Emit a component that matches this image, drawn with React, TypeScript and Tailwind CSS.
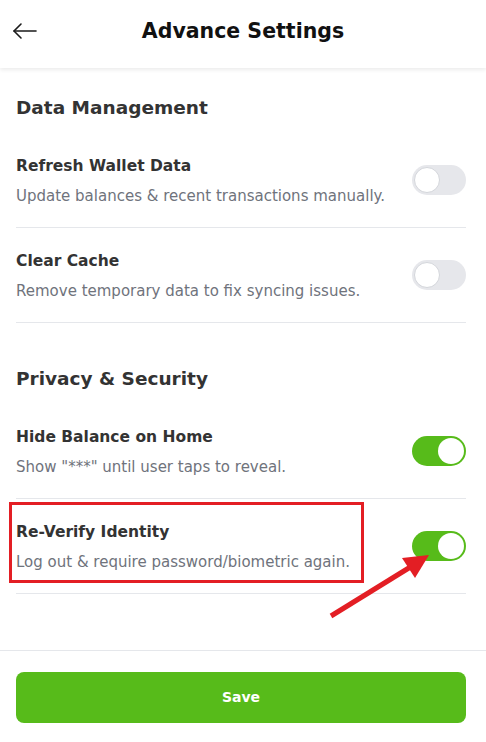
import React, { useState } from 'react';

interface SettingRowProps {
  title: string;
  description: string;
  enabled: boolean;
  onToggle: () => void;
}

const Toggle: React.FC<{ on: boolean; onClick: () => void }> = ({ on, onClick }) => (
  <button
    type="button"
    onClick={onClick}
    className={`relative flex-shrink-0 w-[54px] h-[30px] rounded-full transition-colors ${
      on ? 'bg-[#57bb1a]' : 'bg-[#e6e7eb]'
    }`}
  >
    <span
      className={`absolute top-[2px] w-[26px] h-[26px] rounded-full bg-white ${
        on ? 'left-[26px]' : 'left-[2px] border border-[#d4d6db]'
      }`}
    />
  </button>
);

const SettingRow: React.FC<SettingRowProps> = ({ title, description, enabled, onToggle }) => (
  <div className="flex items-center justify-between gap-4 py-[21px] border-b border-[#e5e7eb]">
    <div className="flex flex-col">
      <span className="text-[15.5px] leading-6 font-semibold text-[#333333]">{title}</span>
      <span className="mt-2 text-[15px] leading-5 text-[#6f737c]">{description}</span>
    </div>
    <Toggle on={enabled} onClick={onToggle} />
  </div>
);

export default function App() {
  const [settings, setSettings] = useState({
    refresh: false,
    cache: false,
    hideBalance: true,
    reverify: true,
  });

  const flip = (key: keyof typeof settings) =>
    setSettings((s) => ({ ...s, [key]: !s[key] }));

  return (
    <div className="relative min-h-screen flex flex-col bg-white font-['DejaVu_Sans',sans-serif]">
      {/* Header */}
      <header className="flex items-center h-[68px] pb-[6px] px-3 bg-white shadow-[0_2px_4px_rgba(0,0,0,0.08)]">
        <button type="button" className="w-[26px] h-[26px] flex items-center justify-center">
          <svg width="26" height="26" viewBox="0 0 26 26" fill="none" stroke="#1a1a1a" strokeWidth="1.6" strokeLinecap="round" strokeLinejoin="round">
            <path d="M24 13H2" />
            <path d="M9 6l-7 7 7 7" />
          </svg>
        </button>
        <h1 className="flex-1 text-center text-[20.5px] font-semibold text-[#111111]">Advance Settings</h1>
        <div className="w-[26px]" />
      </header>

      {/* Content */}
      <main className="flex-1 pl-4 pr-5">
        <section className="mt-[26px]">
          <h2 className="text-[18.5px] leading-7 font-semibold text-[#333333] mb-[11px]">Data Management</h2>
          <SettingRow
            title="Refresh Wallet Data"
            description="Update balances & recent transactions manually."
            enabled={settings.refresh}
            onToggle={() => flip('refresh')}
          />
          <SettingRow
            title="Clear Cache"
            description="Remove temporary data to fix syncing issues."
            enabled={settings.cache}
            onToggle={() => flip('cache')}
          />
        </section>

        <section className="mt-[42px]">
          <h2 className="text-[18.5px] leading-7 font-semibold text-[#333333] mb-[11px]">Privacy &amp; Security</h2>
          <SettingRow
            title="Hide Balance on Home"
            description={'Show "***" until user taps to reveal.'}
            enabled={settings.hideBalance}
            onToggle={() => flip('hideBalance')}
          />
          <SettingRow
            title="Re-Verify Identity"
            description="Log out & require password/biometric again."
            enabled={settings.reverify}
            onToggle={() => flip('reverify')}
          />
        </section>
      </main>

      {/* Footer */}
      <footer className="border-t border-[#e5e7eb] pl-4 pr-5 pt-[21px] pb-[19px]">
        <button
          type="button"
          className="w-full h-[51px] rounded-lg bg-[#57bb1a] text-white text-[14px] font-semibold"
        >
          Save
        </button>
      </footer>

      {/* Annotation overlay */}
      <div className="absolute left-[9px] top-[502px] w-[355px] h-[81px] border-[3px] border-[#e31e24] pointer-events-none" />
      <svg className="absolute left-0 top-0 pointer-events-none" width="486" height="742">
        <line x1="331" y1="616" x2="412" y2="566" stroke="#e31e24" strokeWidth="5" />
        <polygon points="429,555 402,558 415,578" fill="#e31e24" />
      </svg>
    </div>
  );
}
